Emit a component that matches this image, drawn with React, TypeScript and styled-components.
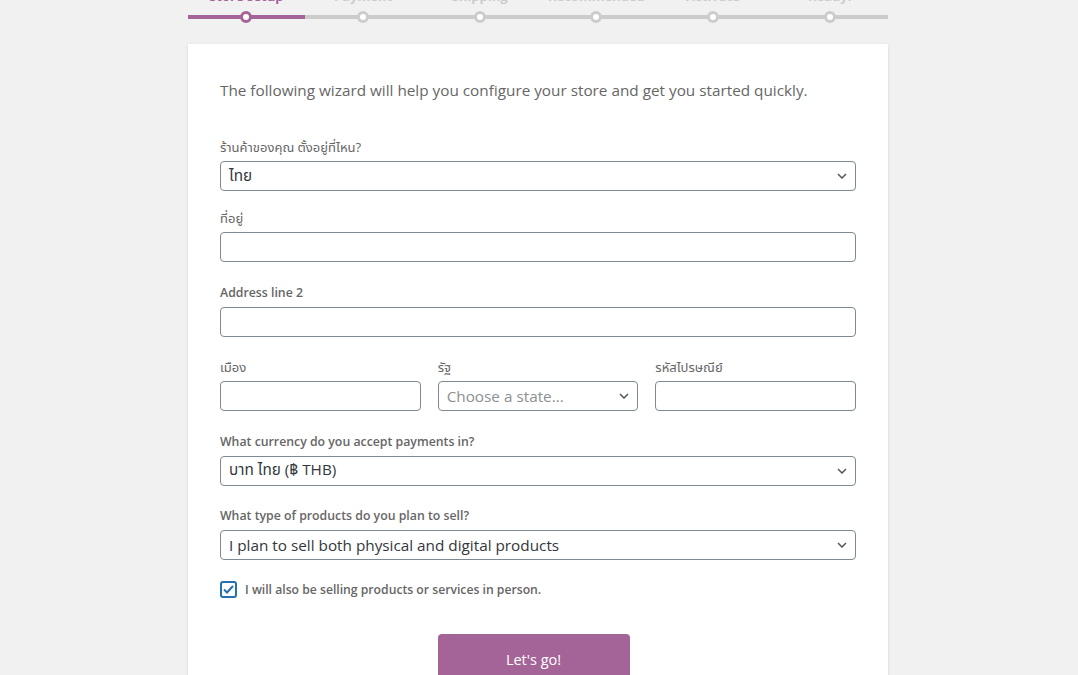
import styled, { createGlobalStyle } from 'styled-components';

const GlobalStyle = createGlobalStyle`
  html, body {
    margin: 0;
    padding: 0;
    background: #f1f1f1;
    overflow: hidden;
  }
  body {
    font-family: "Open Sans", "Noto Sans", "Noto Sans Thai", sans-serif;
    color: #555;
  }
`;

const Page = styled.div`
  width: 700px;
  margin: 0 auto;
  padding-right: 2px;
`;

const Steps = styled.ol`
  display: flex;
  list-style: none;
  margin: -12px 0 0;
  padding: 0;
`;

const Step = styled.li`
  flex: 1;
  display: flex;
  flex-direction: column;
  align-items: center;
  gap: 7px;
`;

const StepLabel = styled.span<{ $active?: boolean }>`
  font-size: 13px;
  line-height: 16px;
  font-weight: 700;
  color: ${({ $active }) => ($active ? '#a46497' : '#ccc')};
`;

const Track = styled.div<{ $active?: boolean }>`
  width: 100%;
  height: 12px;
  display: flex;
  align-items: center;
  justify-content: center;
  background: linear-gradient(
    to bottom,
    transparent 4px,
    ${({ $active }) => ($active ? '#a46497' : '#ccc')} 4px,
    ${({ $active }) => ($active ? '#a46497' : '#ccc')} 8px,
    transparent 8px
  );
`;

const Dot = styled.span<{ $active?: boolean }>`
  width: 6px;
  height: 6px;
  border-radius: 50%;
  background: #fff;
  border: 3px solid ${({ $active }) => ($active ? '#a46497' : '#ccc')};
`;

const Card = styled.div`
  margin-top: 21px;
  background: #fff;
  box-shadow: 0 1px 3px rgba(0, 0, 0, 0.13);
  padding: 32px 32px 40px;
`;

const Intro = styled.p`
  margin: 0 0 33px;
  font-size: 15.3px;
  line-height: 28px;
  color: #666;
`;

const Field = styled.div<{ $space?: number }>`
  display: flex;
  flex-direction: column;
  gap: 4px;
  margin-bottom: ${({ $space }) => $space ?? 20.6}px;
`;

const Label = styled.label`
  font-size: 12.3px;
  line-height: 20px;
  font-weight: 600;
  color: #666;
`;

const ThaiLabel = styled(Label)`
  font-weight: 400;
  font-size: 13px;
`;

const TextInput = styled.div`
  box-sizing: border-box;
  height: 30px;
  border: 1px solid #7e8993;
  border-radius: 4px;
  background: #fff;
`;

const Select = styled(TextInput)<{ $placeholder?: boolean }>`
  display: flex;
  align-items: center;
  justify-content: space-between;
  padding: 0 8px;
  font-size: 15.3px;
  color: ${({ $placeholder }) => ($placeholder ? '#8c8f94' : '#32373c')};
`;

const Row = styled.div`
  display: grid;
  grid-template-columns: 1fr 1fr 1fr;
  gap: 17px;
`;

const CheckRow = styled.label`
  display: flex;
  align-items: center;
  gap: 8px;
  margin-top: 3px;
  font-size: 12.2px;
  font-weight: 600;
  color: #666;
`;

const Box = styled.span`
  box-sizing: border-box;
  width: 17px;
  height: 17px;
  border: 2px solid #2271b1;
  border-radius: 3px;
  display: flex;
  align-items: center;
  justify-content: center;
`;

const Actions = styled.div`
  display: flex;
  justify-content: center;
  margin-top: 36px;
  padding-right: 9px;
`;

const Button = styled.button`
  width: 192px;
  height: 52px;
  border: none;
  border-radius: 4px;
  background: #a46497;
  color: #fff;
  font-family: inherit;
  font-size: 14.5px;
`;

function Chevron() {
  return (
    <svg width="10" height="6" viewBox="0 0 10 6" fill="none">
      <path d="M1 1l4 4 4-4" stroke="#50575e" strokeWidth="1.5" />
    </svg>
  );
}

const steps = ['Store setup', 'Payment', 'Shipping', 'Recommended', 'Activate', 'Ready!'];

export default function App() {
  return (
    <>
      <GlobalStyle />
      <Page>
        <Steps>
          {steps.map((s, i) => (
            <Step key={s}>
              <StepLabel $active={i === 0}>{s}</StepLabel>
              <Track $active={i === 0}>
                <Dot $active={i === 0} />
              </Track>
            </Step>
          ))}
        </Steps>

        <Card>
          <Intro>The following wizard will help you configure your store and get you started quickly.</Intro>

          <Field $space={17}>
            <ThaiLabel>ร้านค้าของคุณ ตั้งอยู่ที่ไหน?</ThaiLabel>
            <Select>
              ไทย
              <Chevron />
            </Select>
          </Field>

          <Field>
            <ThaiLabel>ที่อยู่</ThaiLabel>
            <TextInput />
          </Field>

          <Field>
            <Label>Address line 2</Label>
            <TextInput />
          </Field>

          <Row>
            <Field>
              <ThaiLabel>เมือง</ThaiLabel>
              <TextInput />
            </Field>
            <Field>
              <ThaiLabel>รัฐ</ThaiLabel>
              <Select $placeholder>
                Choose a state...
                <Chevron />
              </Select>
            </Field>
            <Field>
              <ThaiLabel>รหัสไปรษณีย์</ThaiLabel>
              <TextInput />
            </Field>
          </Row>

          <Field>
            <Label>What currency do you accept payments in?</Label>
            <Select>
              บาท ไทย (฿ THB)
              <Chevron />
            </Select>
          </Field>

          <Field>
            <Label>What type of products do you plan to sell?</Label>
            <Select>
              I plan to sell both physical and digital products
              <Chevron />
            </Select>
          </Field>

          <CheckRow>
            <Box>
              <svg width="11" height="9" viewBox="0 0 11 9" fill="none">
                <path d="M1 4.5l3 3L10 1" stroke="#2271b1" strokeWidth="2" />
              </svg>
            </Box>
            I will also be selling products or services in person.
          </CheckRow>

          <Actions>
            <Button>Let's go!</Button>
          </Actions>
        </Card>
      </Page>
    </>
  );
}
